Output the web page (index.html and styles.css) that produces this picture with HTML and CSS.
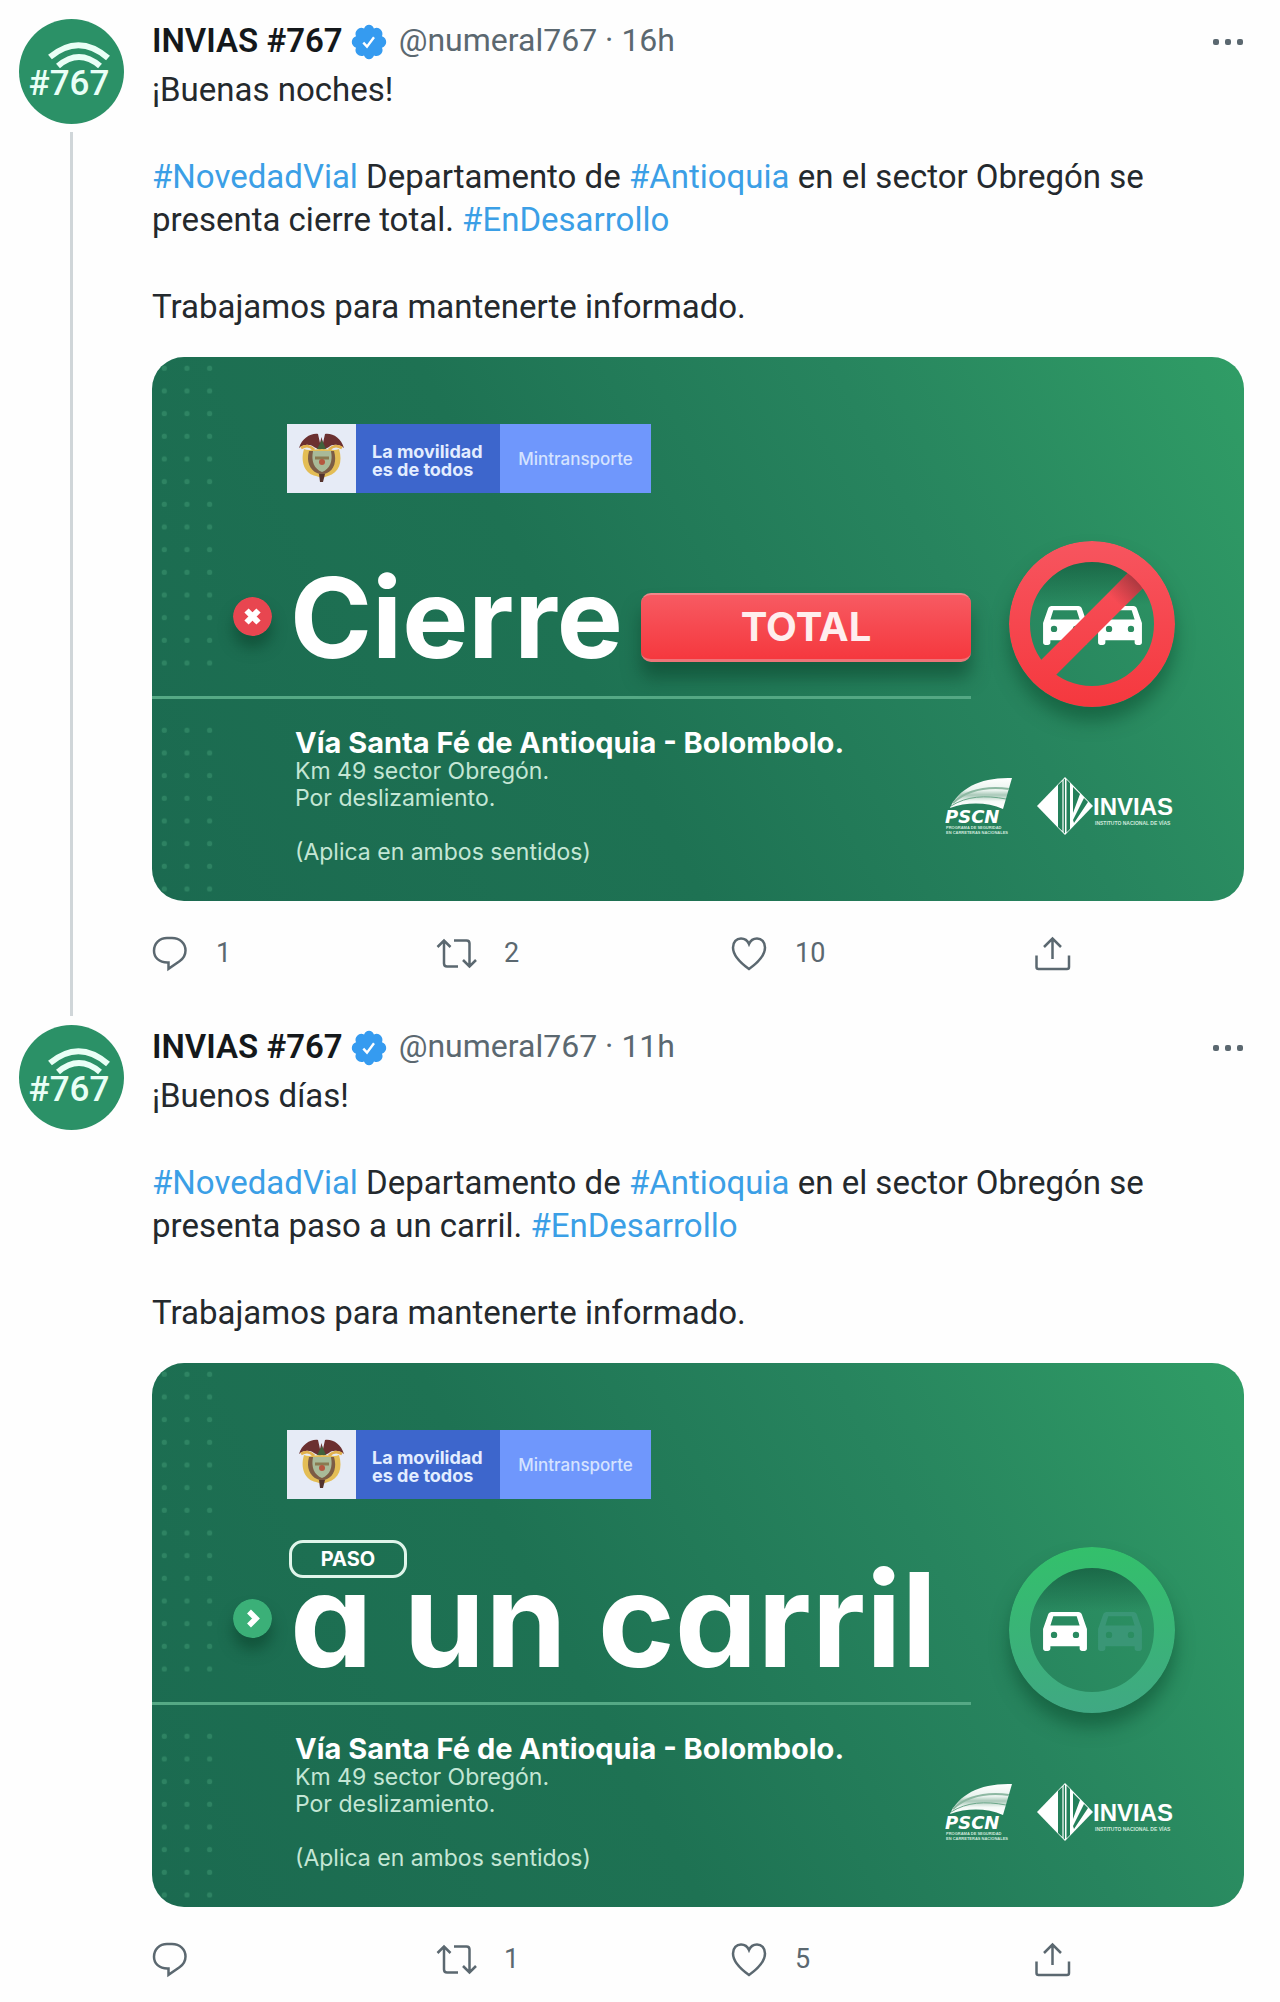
FILE: index.html
```html
<!DOCTYPE html>
<html lang="es">
<head>
    <meta charset="UTF-8">
    <meta name="viewport" content="width=device-width, initial-scale=1.0">
    <title>INVIAS #767</title>
    <link rel="stylesheet" href="styles.css">
</head>
<body>

<!-- Iconos compartidos -->
<svg class="sprite" aria-hidden="true">
    <defs>
        <pattern id="dotPattern" x="0" y="0" width="22.67" height="22.67" patternUnits="userSpaceOnUse">
            <circle cx="11.3" cy="11.3" r="2.6" fill="#3f9a74" fill-opacity="0.5"/>
        </pattern>
        <linearGradient id="redRing" x1="0" y1="0" x2="0" y2="166" gradientUnits="userSpaceOnUse">
            <stop offset="0" stop-color="#f7555f"/>
            <stop offset="1" stop-color="#f5383e"/>
        </linearGradient>
        <linearGradient id="greenRing" x1="0" y1="0" x2="0" y2="166" gradientUnits="userSpaceOnUse">
            <stop offset="0" stop-color="#33c06b"/>
            <stop offset="1" stop-color="#40a883"/>
        </linearGradient>
        <linearGradient id="barShade" x1="127" y1="39" x2="106" y2="60" gradientUnits="userSpaceOnUse">
            <stop offset="0" stop-color="#7a2a30" stop-opacity="0.6"/>
            <stop offset="1" stop-color="#7a2a30" stop-opacity="0"/>
        </linearGradient>
        <linearGradient id="innerShade" x1="0" y1="0" x2="0" y2="1">
            <stop offset="0" stop-color="#0f4f36" stop-opacity="0.6"/>
            <stop offset="0.35" stop-color="#0f4f36" stop-opacity="0"/>
        </linearGradient>
        <linearGradient id="roadFill" x1="0" y1="0" x2="0" y2="1">
            <stop offset="0" stop-color="#fff"/>
            <stop offset="0.4" stop-color="#e9f3ee"/>
            <stop offset="0.55" stop-color="#a9c9b9"/>
            <stop offset="0.75" stop-color="#f4faf7"/>
            <stop offset="1" stop-color="#fff"/>
        </linearGradient>
    </defs>
    <symbol id="verified" viewBox="0 0 36 36">
        <path fill="#359bf0" d="M18 0.8 Q21.400 0.800 22.900 4.400 Q27 2.500 29.800 5.700 Q32.300 8.600 31 12.200 Q35.200 14 35.200 18 Q35.200 21.800 31 23.800 Q32.500 27.300 30 30 Q27 33.200 23 31.500 Q21.500 35.200 18 35.200 Q14.500 35.200 13 31.500 Q9 33.200 6 30 Q3.500 27.300 5 23.800 Q0.800 21.800 0.800 18 Q0.800 14 5 12.200 Q3.500 8.600 6.200 5.700 Q9 2.500 13.100 4.400 Q14.600 0.800 18 0.800z"/>
        <path d="M12.300 18.600 L16 22.600 L23 13.200" fill="none" stroke="#fff" stroke-width="2.400"/>
    </symbol>
    <symbol id="more" viewBox="0 0 32 8">
        <rect x="1" y="1" width="6" height="6" rx="2"/>
        <rect x="13" y="1" width="6" height="6" rx="2"/>
        <rect x="25" y="1" width="6" height="6" rx="2"/>
    </symbol>
    <symbol id="reply" viewBox="0 0 40 40">
        <path stroke-width="2.5" d="M15.500 29.500 C7 29.500 2 24.500 2 17.800 C2 10.500 7.500 5 15 5 H20 C28 5 33.500 10.500 33.500 17.500 C33.500 22 31.500 25.500 27.500 28.200 L16.500 35.800 V29.500z"/>
    </symbol>
    <symbol id="retweet" viewBox="0 0 44 40">
        <path stroke-width="2.5" d="M1.500 14 L8 7.500 L14.500 14 M8 7.500 V30.500 Q8 33.500 11 33.500 H22 M18 7.500 H30.500 Q33.500 7.500 33.500 10.500 V33.500 M27 27 L33.500 33.500 L40 27"/>
    </symbol>
    <symbol id="like" viewBox="0 0 40 40">
        <path stroke-width="2.5" d="M18 36 C11 31 2 23 2 14.500 C2 9 5.500 5.500 10 5.500 C13.500 5.500 16.500 7.500 18 11 C19.500 7.500 22.500 5.500 26 5.500 C30.500 5.500 34 9 34 14.500 C34 23 25 31 18 36z"/>
    </symbol>
    <symbol id="share" viewBox="0 0 40 40">
        <path stroke-width="2.5" d="M18.500 26 V5.500 M10 14 L18.500 5.500 L27 14 M2.500 22.500 V34 Q2.500 36 4.500 36 H33 Q35 36 35 34 V22.500"/>
    </symbol>
    <symbol id="car" viewBox="3 5 18 16">
        <path fill-rule="evenodd" d="M18.920 6.010C18.720 5.420 18.160 5 17.500 5h-11c-.66 0-1.210.42-1.420 1.010L3 12v8c0 .55.45 1 1 1h1c.55 0 1-.45 1-1v-1h12v1c0 .55.45 1 1 1h1c.55 0 1-.45 1-1v-8l-2.080-5.990zM7.500 15.700a1.300 1.300 0 1 1 0-2.600 1.300 1.300 0 0 1 0 2.600zM16.500 15.700a1.300 1.300 0 1 1 0-2.600 1.300 1.300 0 0 1 0 2.600zM6 10.500l1.200-3.800h9.600L18 10.500z"/>
    </symbol>
    <symbol id="coat" viewBox="0 0 69 69">
        <path d="M12 24 C15 14 24 9 31 10 L33 19 L34.500 13 L36 19 L38 10 C46 9 54 14 57 24 C52 20 45 20 42 23 L34.500 27 L27 23 C23 20 17 20 12 24z" fill="#6b3030"/>
        <path d="M14 24 C19 21 24 22 27 26 M55 24 C50 21 45 22 42 26" fill="none" stroke="#e2b14d" stroke-width="3"/>
        <path d="M17 25 C13 38 18 50 29 52 L35 54 L41 52 C52 49 56 38 52 25 C47 27 43 25 35 25 C27 25 22 27 17 25z" fill="#e3bd55"/>
        <path d="M22 27 C19 38 23 46 30 49 L35 51 L40 49 C47 46 50 37 47 27z" fill="#7c5c45"/>
        <path d="M26 27 H44 C46 37 43 45 35 48 C27 45 24 37 26 27z" fill="#a9ba98"/>
        <path d="M28 34 H42" stroke="#8a7a50" stroke-width="3"/>
        <circle cx="35" cy="38" r="3" fill="#b5573f"/>
        <path d="M30 25 L35 16 L39 25z" fill="#41613c"/>
        <path d="M32 50 H38 L36 58 H33z" fill="#54332d"/>
    </symbol>
    <symbol id="waves" viewBox="0 0 105 105">
        <circle cx="52.5" cy="52.5" r="52.5" fill="#2b9167"/>
        <path d="M31 38 Q60 14 89 39" fill="none" stroke="#e9fff6" stroke-width="6"/>
        <path d="M39 47 Q60 29 81 47" fill="none" stroke="#e9fff6" stroke-width="6"/>
    </symbol>
    <symbol id="swoosh" viewBox="0 0 67 58">
        <path d="M5 31 C14 11 36 0 67 1 L58 32 C42 25 22 25 5 31z" fill="url(#roadFill)"/>
        <path d="M8 26 C22 13 40 9 64 12" fill="none" stroke="#8db8a2" stroke-width="2"/>
        <path d="M6 29 C22 19 40 18 61 22" fill="none" stroke="#6ba78a" stroke-width="1"/>
    </symbol>
    <symbol id="diamond" viewBox="0 0 56 58">
        <path d="M28 0 L56 29 L28 58 L0 29z" fill="#fff"/>
        <path d="M21 8 L28 1.500 V56.500 L21 50z" fill="#24805b"/>
        <path d="M26 3 V55" stroke="#fff" stroke-width="1.200"/>
        <path d="M29.500 2.500 L33 6 V52 L29.500 55.500z" fill="#24805b"/>
        <path d="M36 10 L43 17 L36 36z M47 21 L51 25 L37 46 L36 43z" fill="#24805b"/>
    </symbol>
</svg>

<main class="thread">

    <article class="tweet">
        <div class="tweet-side">
            <svg class="avatar" viewBox="0 0 105 105">
                <use href="#waves"/>
                <text x="50" y="76" text-anchor="middle" class="avatar-text">#767</text>
            </svg>
            <div class="thread-line"></div>
        </div>
        <div class="tweet-main">
            <header class="tweet-header">
                <strong class="name">INVIAS #767</strong>
                <svg class="badge"><use href="#verified"/></svg>
                <span class="handle">@numeral767 · 16h</span>
                <button class="more-button" aria-label="Más opciones"><svg><use href="#more"/></svg></button>
            </header>
            <div class="tweet-text">
                <p>¡Buenas noches!</p>
                <p><a href="#">#NovedadVial</a> Departamento de <a href="#">#Antioquia</a> en el sector Obregón se presenta cierre total. <a href="#">#EnDesarrollo</a></p>
                <p>Trabajamos para mantenerte informado.</p>
            </div>

            <section class="sign">
                <svg class="dots dots-top"><rect width="100%" height="100%" fill="url(#dotPattern)"/></svg>
                <svg class="dots dots-bottom"><rect width="100%" height="100%" fill="url(#dotPattern)"/></svg>
                <div class="sign-main">
                    <div class="sign-top">
                        <div class="gov">
                            <svg class="gov-coat"><use href="#coat"/></svg>
                            <div class="gov-slogan">La movilidad<br>es de todos</div>
                            <div class="gov-name">Mintransporte</div>
                        </div>
                        <div class="headline">
                            <svg class="bullet" viewBox="0 0 39 39">
                                <circle cx="19.500" cy="19.500" r="19.500" fill="#e84650"/>
                                <path d="M13.500 13.500 L25.500 25.500 M25.500 13.500 L13.500 25.500" stroke="#fff" stroke-width="6"/>
                            </svg>
                            <h2 class="title">Cierre</h2>
                            <div class="total">TOTAL</div>
                        </div>
                    </div>
                    <div class="sign-info">
                        <p class="road">Vía Santa Fé de Antioquia - Bolombolo.</p>
                        <p>Km 49 sector Obregón.</p>
                        <p>Por deslizamiento.</p>
                        <p class="note">(Aplica en ambos sentidos)</p>
                    </div>
                </div>
                <div class="sign-side">
                    <svg class="ring" viewBox="0 0 166 166">
                        <circle cx="83" cy="83" r="63" fill="url(#innerShade)"/>
                        <use href="#car" x="34" y="65" width="44" height="39" fill="#fff"/>
                        <use href="#car" x="89" y="65" width="44" height="39" fill="#fff"/>
                        <path d="M35 131 L131 35" stroke="url(#redRing)" stroke-width="21"/>
                        <path d="M105 61 L131 35" stroke="url(#barShade)" stroke-width="21"/>
                        <circle cx="83" cy="83" r="72.500" fill="none" stroke="url(#redRing)" stroke-width="21"/>
                    </svg>
                    <div class="logos">
                        <svg class="logo-a" viewBox="0 0 67 58">
                            <use href="#swoosh"/>
                            <text x="0" y="46" class="logo-pscn">PSCN</text>
                            <text x="1" y="52" class="logo-small">PROGRAMA DE SEGURIDAD</text>
                            <text x="1" y="57" class="logo-small">EN CARRETERAS NACIONALES</text>
                        </svg>
                        <svg class="logo-b" viewBox="0 0 138 58">
                            <use href="#diamond" width="56" height="58"/>
                            <text x="56" y="38" class="logo-invias">INVIAS</text>
                            <text x="58" y="48" class="logo-small logo-wide">INSTITUTO NACIONAL DE VÍAS</text>
                        </svg>
                    </div>
                </div>
            </section>

            <div class="actions">
                <button aria-label="Responder"><svg><use href="#reply"/></svg><span>1</span></button>
                <button aria-label="Retwittear"><svg class="wide"><use href="#retweet"/></svg><span>2</span></button>
                <button aria-label="Me gusta"><svg><use href="#like"/></svg><span>10</span></button>
                <button aria-label="Compartir"><svg><use href="#share"/></svg></button>
            </div>
        </div>
    </article>

    <article class="tweet">
        <div class="tweet-side">
            <svg class="avatar" viewBox="0 0 105 105">
                <use href="#waves"/>
                <text x="50" y="76" text-anchor="middle" class="avatar-text">#767</text>
            </svg>
        </div>
        <div class="tweet-main">
            <header class="tweet-header">
                <strong class="name">INVIAS #767</strong>
                <svg class="badge"><use href="#verified"/></svg>
                <span class="handle">@numeral767 · 11h</span>
                <button class="more-button" aria-label="Más opciones"><svg><use href="#more"/></svg></button>
            </header>
            <div class="tweet-text">
                <p>¡Buenos días!</p>
                <p><a href="#">#NovedadVial</a> Departamento de <a href="#">#Antioquia</a> en el sector Obregón se presenta paso a un carril. <a href="#">#EnDesarrollo</a></p>
                <p>Trabajamos para mantenerte informado.</p>
            </div>

            <section class="sign">
                <svg class="dots dots-top"><rect width="100%" height="100%" fill="url(#dotPattern)"/></svg>
                <svg class="dots dots-bottom"><rect width="100%" height="100%" fill="url(#dotPattern)"/></svg>
                <div class="sign-main">
                    <div class="sign-top">
                        <div class="gov">
                            <svg class="gov-coat"><use href="#coat"/></svg>
                            <div class="gov-slogan">La movilidad<br>es de todos</div>
                            <div class="gov-name">Mintransporte</div>
                        </div>
                        <div class="pill">PASO</div>
                        <div class="headline">
                            <svg class="bullet" viewBox="0 0 39 39">
                                <circle cx="19.500" cy="19.500" r="19.500" fill="#3bb078"/>
                                <path d="M16 12.500 L23 19.500 L16 26.500" fill="none" stroke="#fff" stroke-width="5.500"/>
                            </svg>
                            <h2 class="title title-big">a un carril</h2>
                        </div>
                    </div>
                    <div class="sign-info">
                        <p class="road">Vía Santa Fé de Antioquia - Bolombolo.</p>
                        <p>Km 49 sector Obregón.</p>
                        <p>Por deslizamiento.</p>
                        <p class="note">(Aplica en ambos sentidos)</p>
                    </div>
                </div>
                <div class="sign-side">
                    <svg class="ring" viewBox="0 0 166 166">
                        <circle cx="83" cy="83" r="63" fill="url(#innerShade)"/>
                        <use href="#car" x="34" y="65" width="44" height="39" fill="#fff"/>
                        <use href="#car" x="89" y="65" width="44" height="39" fill="#3a9676"/>
                        <circle cx="83" cy="83" r="72.500" fill="none" stroke="url(#greenRing)" stroke-width="21"/>
                    </svg>
                    <div class="logos">
                        <svg class="logo-a" viewBox="0 0 67 58">
                            <use href="#swoosh"/>
                            <text x="0" y="46" class="logo-pscn">PSCN</text>
                            <text x="1" y="52" class="logo-small">PROGRAMA DE SEGURIDAD</text>
                            <text x="1" y="57" class="logo-small">EN CARRETERAS NACIONALES</text>
                        </svg>
                        <svg class="logo-b" viewBox="0 0 138 58">
                            <use href="#diamond" width="56" height="58"/>
                            <text x="56" y="38" class="logo-invias">INVIAS</text>
                            <text x="58" y="48" class="logo-small logo-wide">INSTITUTO NACIONAL DE VÍAS</text>
                        </svg>
                    </div>
                </div>
            </section>

            <div class="actions">
                <button aria-label="Responder"><svg><use href="#reply"/></svg></button>
                <button aria-label="Retwittear"><svg class="wide"><use href="#retweet"/></svg><span>1</span></button>
                <button aria-label="Me gusta"><svg><use href="#like"/></svg><span>5</span></button>
                <button aria-label="Compartir"><svg><use href="#share"/></svg></button>
            </div>
        </div>
    </article>

</main>

</body>
</html>
```

FILE: styles.css
```css
* {
    box-sizing: border-box;
}
body {
    margin: 0;
    background-color: #fefefe;
    color: #24292d;
    font-family: Roboto, "Liberation Sans", sans-serif;
    font-size: 33px;
    line-height: 43px;
}
p, h2 {
    margin: 0;
}
a {
    color: #3b9fe6;
    text-decoration: none;
}
button {
    background: none;
    border: none;
    padding: 0;
    color: #5b6870;
    font: inherit;
    cursor: pointer;
}
.sprite {
    position: absolute;
    width: 0;
    height: 0;
}
.thread {
    padding: 10px 36px 0 19px;
}
.tweet {
    display: flex;
    gap: 28px;
    padding-top: 9px;
}
.tweet-side {
    display: flex;
    flex-direction: column;
    align-items: center;
    gap: 8px;
    width: 105px;
    flex-shrink: 0;
}
.avatar {
    width: 105px;
    height: 105px;
}
.avatar-text {
    font: 500 35px Roboto, sans-serif;
    fill: #e9fff6;
}
.thread-line {
    flex: 1;
    width: 3px;
    background-color: #d0d6d9;
}
.tweet-main {
    flex: 1;
    min-width: 0;
}
.tweet-header {
    display: flex;
    align-items: center;
    height: 46px;
    margin-bottom: 3px;
}
.name, .handle {
    padding-bottom: 4px;
}
.name {
    font-weight: 600;
    color: #14181b;
}
.badge {
    width: 36px;
    height: 36px;
    margin: 0 12px 0 8px;
}
.handle {
    color: #5b6870;
    font-size: 32px;
}
.more-button {
    display: flex;
    margin-left: auto;
}
.more-button svg {
    width: 32px;
    height: 8px;
    fill: #5b6870;
}
.tweet-text p + p {
    margin-top: 44px;
}

/* Tarjeta verde */
.sign {
    position: relative;
    display: grid;
    grid-template-columns: minmax(0, 3fr) minmax(0, 1fr);
    min-height: 544px;
    margin-top: 29px;
    border-radius: 32px;
    overflow: hidden;
    background: linear-gradient(62deg, #1b6a50 0%, #1e7253 40%, #27845e 70%, #309d66 100%);
    color: #fff;
    font-family: Inter, "Noto Sans", sans-serif;
}
.dots {
    position: absolute;
    left: 1px;
    width: 68px;
}
.dots-top {
    top: 0;
    height: 317px;
}
.dots-bottom {
    top: 362px;
    height: 181px;
}
.sign-main {
    position: relative;
}
.sign-top {
    display: flex;
    flex-direction: column;
    height: 342px;
    padding: 67px 0 30px 81px;
    border-bottom: 3px solid #55a985;
}
.gov {
    display: flex;
    align-self: flex-start;
    height: 69px;
    margin-left: 54px;
    font-size: 18px;
    line-height: 18px;
}
.gov-coat {
    width: 69px;
    height: 69px;
    background-color: #e6ebf6;
}
.gov-slogan {
    display: flex;
    align-items: center;
    width: 144px;
    padding: 4px 0 0 16px;
    background-color: #3d66cc;
    color: #e3edff;
    font-weight: 700;
}
.gov-name {
    display: flex;
    align-items: center;
    justify-content: center;
    width: 151px;
    background-color: #6f97fc;
    color: #d5e3ff;
    font-size: 17px;
    font-weight: 500;
}
.pill {
    width: 118px;
    margin: 41px 0 -12px 56px;
    border: 3px solid #dff5ea;
    border-radius: 14px;
    font-size: 20px;
    line-height: 32px;
    font-weight: 700;
    text-align: center;
}
.headline {
    display: flex;
    align-items: center;
    gap: 18px;
    margin-top: auto;
}
.bullet {
    width: 39px;
    height: 39px;
    margin-bottom: 4px;
    flex-shrink: 0;
    border-radius: 50%;
    box-shadow: 0 12px 14px rgba(8, 60, 38, 0.5);
}
.title {
    font-size: 111px;
    line-height: 96px;
    font-weight: 700;
    font-feature-settings: "cv11";
    white-space: nowrap;
}
.title-big {
    font-size: 131px;
    line-height: 108px;
}
.total {
    flex: 1;
    align-self: flex-end;
    margin-bottom: 4px;
    border-radius: 10px;
    background: linear-gradient(#f75a62, #f5383e);
    border-top: 2px solid #f2868a;
    border-bottom: 3px solid #ee7478;
    box-shadow: 0 16px 18px rgba(8, 60, 38, 0.5);
    color: #ffeeee;
    font-size: 40px;
    line-height: 64px;
    font-weight: 700;
    text-align: center;
}
.sign-info {
    padding: 28px 0 0 143px;
    font-size: 23px;
    line-height: 27px;
    color: #c4e6d5;
}
.road {
    color: #fff;
    font-size: 29px;
    line-height: 31px;
    font-weight: 700;
}
.note {
    margin-top: 27px;
}
.sign-side {
    display: flex;
    flex-direction: column;
    align-items: flex-end;
    justify-content: space-between;
    padding: 184px 69px 66px 0;
}
.ring {
    width: 166px;
    height: 166px;
    border-radius: 50%;
    box-shadow: 0 14px 18px rgba(8, 70, 42, 0.5);
}
.logos {
    display: flex;
    flex-shrink: 0;
    gap: 25px;
}
.logo-a {
    width: 67px;
    height: 58px;
}
.logo-b {
    width: 138px;
    height: 58px;
}
.logo-pscn {
    font: italic 700 18px "DejaVu Sans", sans-serif;
    fill: #fff;
}
.logo-invias {
    font: 700 24px "Liberation Sans", sans-serif;
    fill: #fff;
}
.logo-small {
    font: 700 4px "Liberation Sans", sans-serif;
    fill: #cfe8dc;
}
.logo-wide {
    font-size: 5px;
}

/* Botones inferiores */
.actions {
    display: grid;
    grid-template-columns: 284fr 295fr 303fr 210fr;
    padding: 32px 0 43px;
}
.tweet:last-child .actions {
    padding-bottom: 20px;
}
.actions button {
    display: flex;
    align-items: center;
    gap: 24px;
    font-size: 27px;
    line-height: 40px;
}
.actions svg {
    width: 40px;
    height: 40px;
    fill: none;
    stroke: #5b6870;
}
.actions svg.wide {
    width: 44px;
}
```
